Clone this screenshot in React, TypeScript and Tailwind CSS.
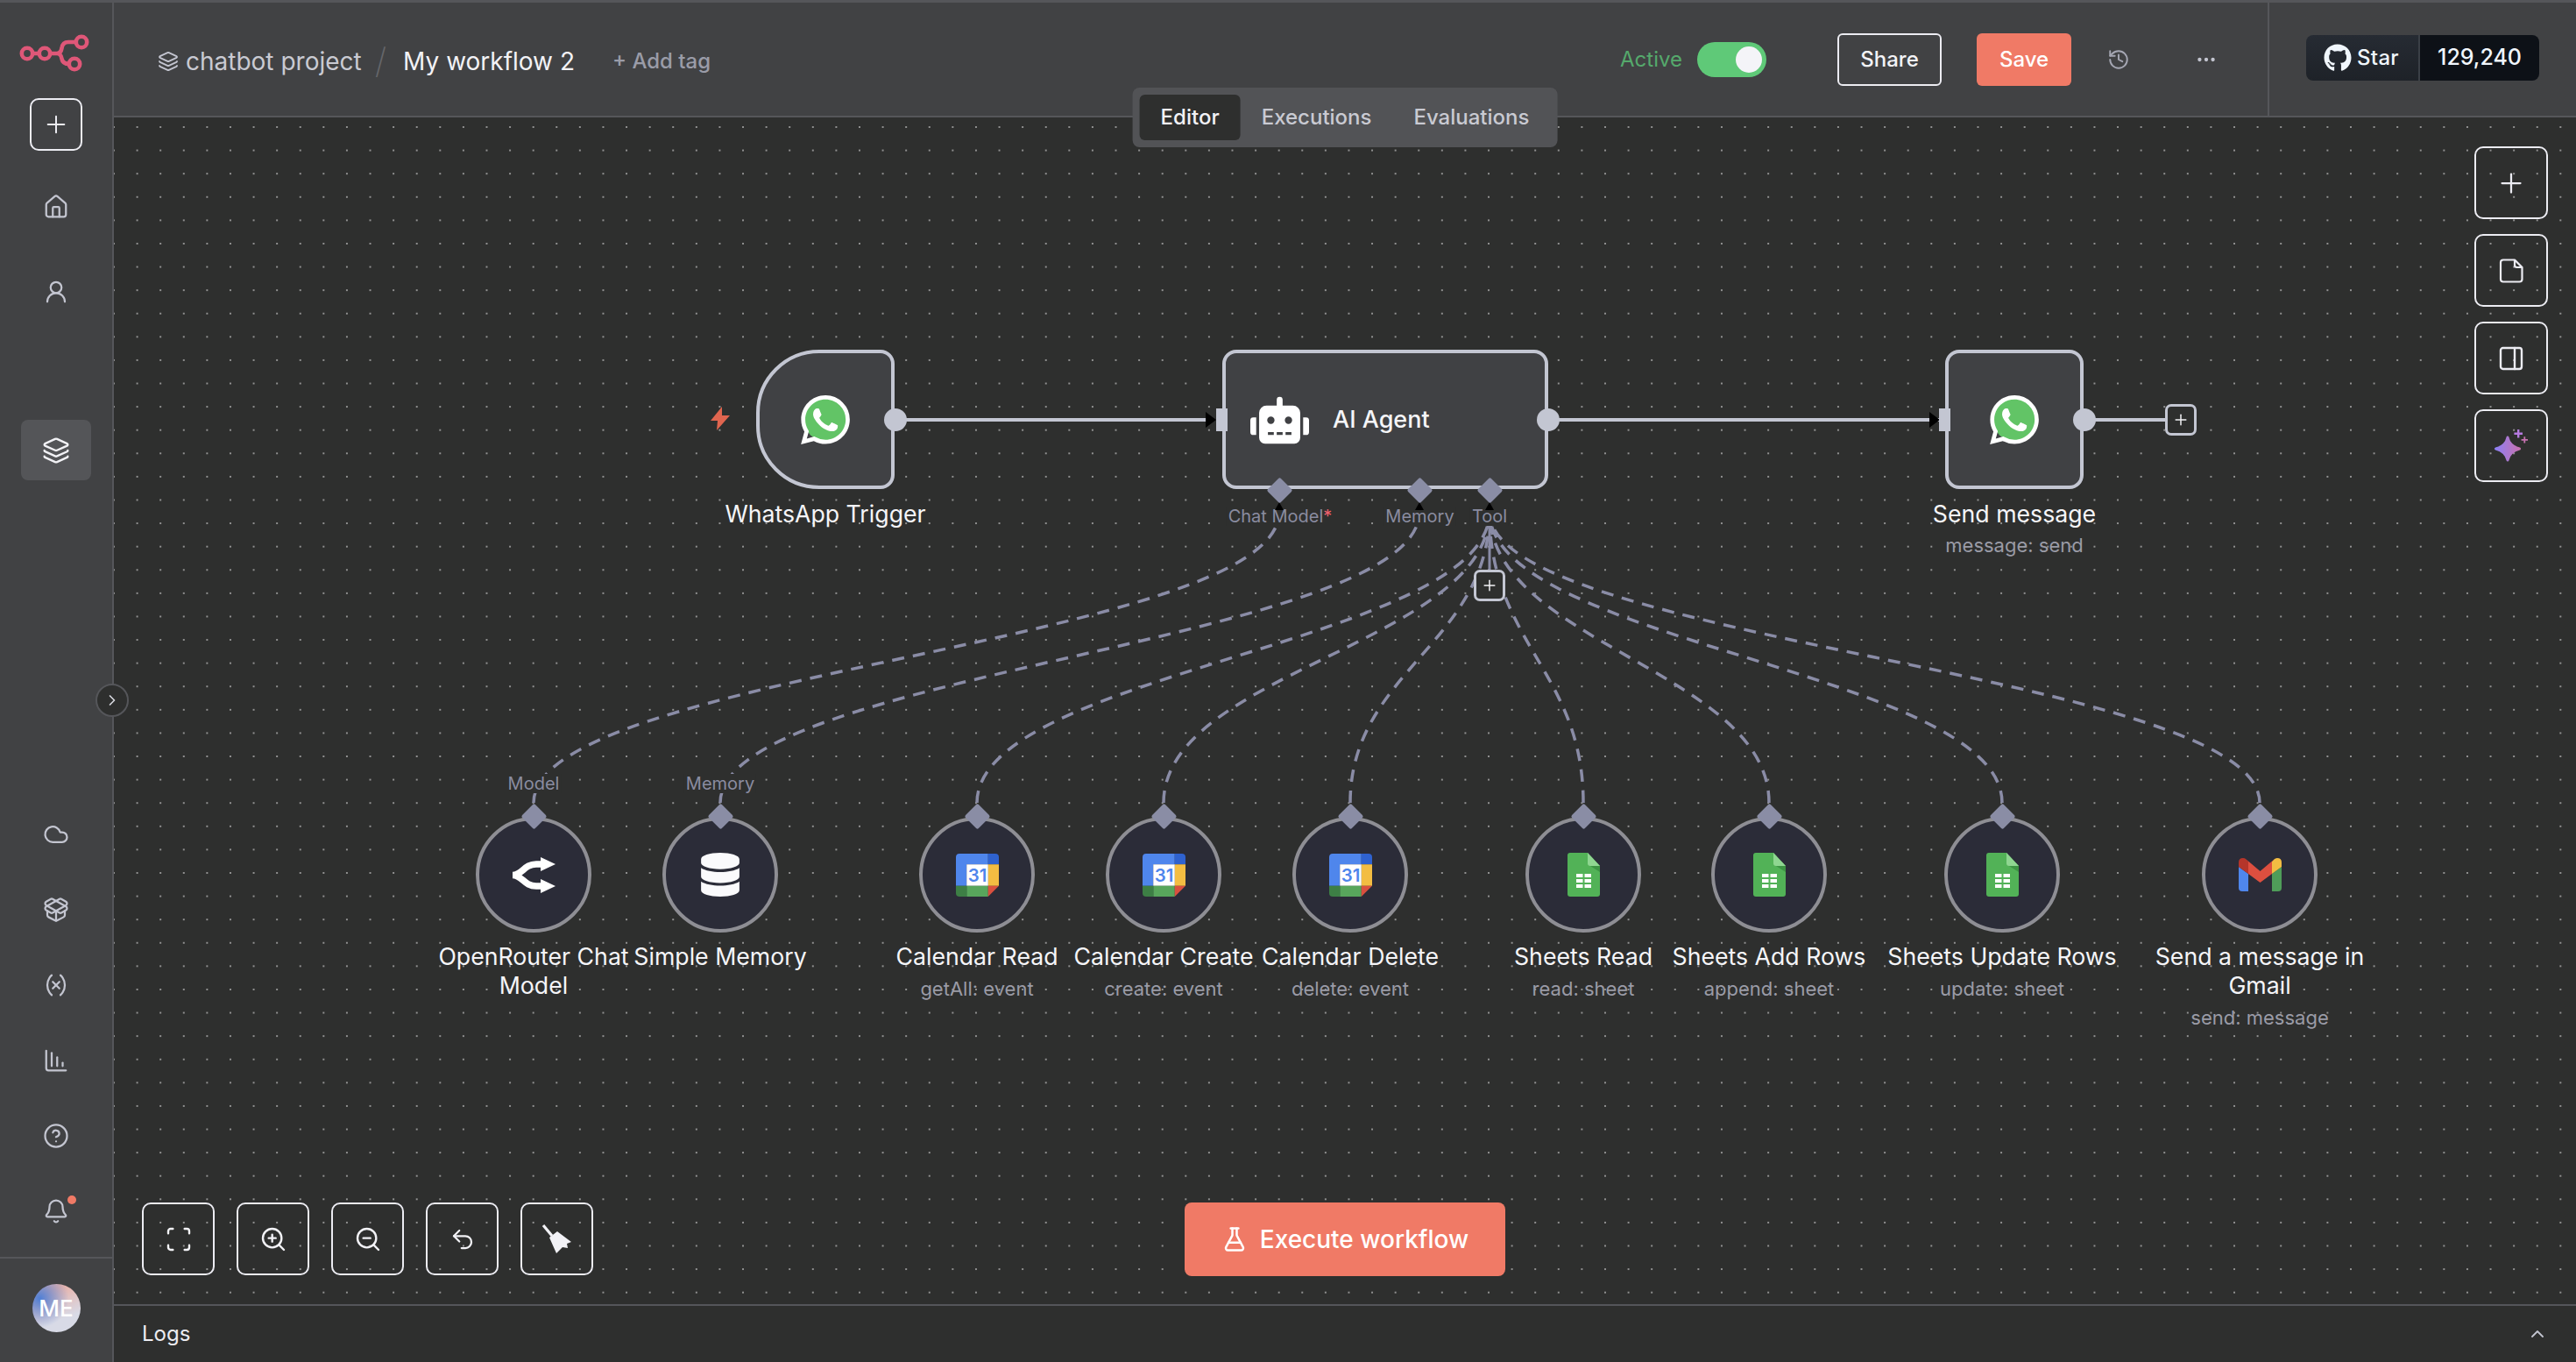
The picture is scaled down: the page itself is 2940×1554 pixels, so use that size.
import React from 'react';
import {
  Plus, House, UserRound, Layers, Cloud, PackageOpen, Variable, ChartColumnDecreasing, CircleHelp, Bell,
  History, Ellipsis, Scan, ZoomIn, ZoomOut, Undo2, FlaskConical, ChevronUp, ChevronRight, PanelRight,
} from 'lucide-react';
import { FaRobot, FaDatabase, FaGithub } from 'react-icons/fa';

const WA_PATH =
  'M17.472 14.382c-.297-.149-1.758-.867-2.03-.967-.273-.099-.471-.148-.67.15-.197.297-.767.966-.94 1.164-.173.199-.347.223-.644.075-.297-.15-1.255-.463-2.39-1.475-.883-.788-1.48-1.761-1.653-2.059-.173-.297-.018-.458.13-.606.134-.133.298-.347.446-.52.149-.174.198-.298.298-.497.099-.198.05-.371-.025-.52-.075-.149-.669-1.612-.916-2.207-.242-.579-.487-.5-.669-.51-.173-.008-.371-.01-.57-.01-.198 0-.52.074-.792.372-.272.297-1.04 1.016-1.04 2.479 0 1.462 1.065 2.875 1.213 3.074.149.198 2.096 3.2 5.077 4.487.709.306 1.262.489 1.694.625.712.227 1.36.195 1.871.118.571-.085 1.758-.719 2.006-1.413.248-.694.248-1.289.173-1.413-.074-.124-.272-.198-.57-.347m-5.421 7.403h-.004a9.87 9.87 0 01-5.031-1.378l-.361-.214-3.741.982.998-3.648-.235-.374a9.86 9.86 0 01-1.51-5.26c.001-5.45 4.436-9.884 9.888-9.884 2.64 0 5.122 1.03 6.988 2.898a9.825 9.825 0 012.893 6.994c-.003 5.45-4.437 9.884-9.885 9.884m8.413-18.297A11.815 11.815 0 0012.05 0C5.495 0 .16 5.335.157 11.892c0 2.096.547 4.142 1.588 5.945L.057 24l6.305-1.654a11.882 11.882 0 005.683 1.448h.005c6.554 0 11.89-5.335 11.893-11.893a11.821 11.821 0 00-3.48-8.413z';

function WhatsApp() {
  return (
    <svg width="56" height="56" viewBox="0 0 24 24">
      <circle cx="12" cy="12" r="10.4" fill="#62c466" />
      <path d={WA_PATH} fill="#ffffff" />
    </svg>
  );
}

function Logo() {
  return (
    <svg width="82" height="44" viewBox="22 39 82 44" fill="none" stroke="#df5778" strokeWidth="4.6">
      <circle cx="31" cy="61" r="6.2" />
      <circle cx="51" cy="61" r="6.2" />
      <circle cx="93" cy="48" r="6.2" />
      <circle cx="85" cy="73" r="6.2" />
      <path d="M37 61H45M57 61H65C69 61 70 58 70.5 55C71 51 73 48 78 48H87M65 61C69 61 70 64 70.5 67C71 70 73 73 79 73" />
    </svg>
  );
}

function CalendarIcon() {
  return (
    <svg width="49" height="49" viewBox="0 0 48 48">
      <path d="M4 0H36V12H12V36H0V4Q0 0 4 0Z" fill="#4f86ec" />
      <path d="M36 0H44Q48 0 48 4V12H36Z" fill="#2f62cf" />
      <rect x="36" y="12" width="12" height="24" fill="#f3bd42" />
      <rect x="12" y="12" width="24" height="24" fill="#ffffff" />
      <rect x="12" y="36" width="24" height="12" fill="#58a65c" />
      <path d="M0 36H12V48H4Q0 48 0 44Z" fill="#3d7f45" />
      <path d="M36 36H48L36 48Z" fill="#d9503f" />
      <text x="24" y="31" textAnchor="middle" fontSize="20" fontWeight="600" fontFamily="Inter, sans-serif" fill="#4f86ec">31</text>
    </svg>
  );
}

function SheetsIcon() {
  return (
    <svg width="37" height="50" viewBox="0 0 37 50">
      <path d="M3 0H23L37 15V47Q37 50 34 50H3Q0 50 0 47V3Q0 0 3 0Z" fill="#52b257" />
      <path d="M23 0L37 15H26Q23 15 23 12Z" fill="#8fd691" />
      <path d="M26 15H37V22Z" fill="#3d9444" />
      <path d="M10 24H27V40H10Z" fill="#ffffff" />
      <path d="M10 29H27M10 35H27M18.5 24V40" stroke="#52b257" strokeWidth="2" />
    </svg>
  );
}

function GmailIcon() {
  return (
    <svg width="49" height="38" viewBox="0 0 49 38">
      <path d="M0 10L11 18V38H4Q0 38 0 34Z" fill="#4f86ec" />
      <path d="M38 18L49 10V34Q49 38 45 38H38Z" fill="#4f9d59" />
      <path d="M0 10V5Q0 0 5 0Q7 0 8 1L11 4V18Z" fill="#b5352a" />
      <path d="M38 18V4L41 1Q43 0 44 0Q49 0 49 5V10Z" fill="#f3bd42" />
      <path d="M8 1L24.5 15L41 1L38 4V18L24.5 28L11 18V4Z" fill="#dd4f3f" />
    </svg>
  );
}

function OpenRouterIcon() {
  return (
    <svg width="50" height="41" viewBox="0 0 50 41">
      <path d="M1 20.5C12 20.5 14 8 28 8H36M1 20.5C12 20.5 14 33 28 33H36" fill="none" stroke="#fff" strokeWidth="7.5" />
      <path d="M33 0L50 8L33 16ZM33 25L50 33L33 41Z" fill="#fff" />
    </svg>
  );
}

function BroomIcon() {
  return (
    <svg width="36" height="36" viewBox="0 0 36 36" fill="#f2f2f6">
      <path d="M2 2L12 14" fill="none" stroke="#f2f2f6" strokeWidth="3.2" />
      <path d="M9 16L18 9L34 21L29 23L30 28L24 27L17 34Z" />
    </svg>
  );
}

const railIconClass = 'text-[#c3c5d0]';

function RailRow({ children }: { children: React.ReactNode }) {
  return <div className="flex items-center justify-center h-[86px]">{children}</div>;
}

function Sidebar() {
  return (
    <aside className="w-[130px] shrink-0 border-r-2 border-[#55565a] bg-[#414244] flex flex-col items-stretch">
      <div className="mt-[36px] flex justify-center pr-[3px]">
        <Logo />
      </div>
      <div className="mt-[29px] flex justify-center">
        <button className="w-[60px] h-[60px] rounded-[10px] border-2 border-[#ececf2] flex items-center justify-center text-[#ececf2]">
          <Plus size={32} strokeWidth={1.5} />
        </button>
      </div>
      <div className="mt-[15px] h-[97px] flex items-center justify-center">
        <House size={30} strokeWidth={1.8} className={railIconClass} />
      </div>
      <div className="h-[97px] flex items-center justify-center">
        <UserRound size={30} strokeWidth={1.8} className={railIconClass} />
      </div>
      <div className="mt-[98px] mx-[24px] h-[69px] rounded-[8px] bg-[#545558] flex items-center justify-center">
        <Layers size={32} strokeWidth={1.8} className="text-[#f2f2f6]" />
      </div>
      <div className="flex-1" />
      <RailRow><Cloud size={30} strokeWidth={1.8} className={railIconClass} /></RailRow>
      <RailRow><PackageOpen size={30} strokeWidth={1.8} className={railIconClass} /></RailRow>
      <RailRow><Variable size={30} strokeWidth={1.8} className={railIconClass} /></RailRow>
      <RailRow><ChartColumnDecreasing size={30} strokeWidth={1.8} className={railIconClass} /></RailRow>
      <RailRow><CircleHelp size={30} strokeWidth={1.8} className={railIconClass} /></RailRow>
      <RailRow>
        <div className="relative">
          <Bell size={30} strokeWidth={1.8} className={railIconClass} />
          <span className="absolute -top-[3px] -right-[8px] w-[10px] h-[10px] rounded-full bg-[#f07a66]" />
        </div>
      </RailRow>
      <div className="mt-[9px] h-[120px] border-t-2 border-[#55565a] flex justify-center pt-[29px]">
        <div className="w-[55px] h-[55px] rounded-full bg-[radial-gradient(circle_at_15%_30%,#4f7fd6_0%,transparent_55%),linear-gradient(160deg,#e8b3ab_20%,#d8dae6_70%)] flex items-center justify-center text-white text-[26px] font-medium">
          ME
        </div>
      </div>
    </aside>
  );
}

function Header() {
  return (
    <header className="h-[131px] shrink-0 bg-[#414244] border-b-2 border-[#55565a] flex items-stretch">
      <div className="flex items-center pl-[50px] pt-[4px]">
        <Layers size={24} strokeWidth={1.8} className="text-[#c3c5d0]" />
        <span className="ml-[8px] text-[28px] text-[#c9cad2]">chatbot project</span>
        <span className="ml-[15px] text-[40px] font-extralight text-[#65666a]">/</span>
        <span className="ml-[19px] text-[28px] text-[#f2f2f6]">My workflow 2</span>
        <span className="ml-[43px] text-[24px] font-medium text-[#9a9ca8]">+ Add tag</span>
      </div>
      <div className="ml-auto flex items-center">
        <span className="text-[24px] text-[#55a96c]">Active</span>
        <div className="ml-[17px] w-[79px] h-[40px] rounded-full bg-[#5fc978] flex items-center justify-end pr-[5px]">
          <span className="w-[30px] h-[30px] rounded-full bg-[#f4f4f8]" />
        </div>
        <button className="ml-[81px] w-[119px] h-[60px] rounded-[6px] border-2 border-[#ececf2] text-[24px] font-medium text-[#f2f2f6]">Share</button>
        <button className="ml-[40px] w-[108px] h-[60px] rounded-[6px] bg-[#f07a66] text-[24px] font-medium text-white">Save</button>
        <History size={26} strokeWidth={1.8} className="ml-[41px] text-[#a5a7b3]" />
        <Ellipsis size={26} strokeWidth={2} className="ml-[74px] text-[#c3c5d0]" />
      </div>
      <div className="ml-[57px] w-[352px] border-l-2 border-[#55565a] pl-[42px] flex items-center">
        <div className="-mt-[3px] w-[266px] h-[52px] rounded-[8px] overflow-hidden flex">
          <div className="w-[128px] bg-[linear-gradient(180deg,#262b33,#1e2228)] flex items-center justify-center gap-[6px] pr-[2px] text-[#f0f6fc]">
            <FaGithub size={32} />
            <span className="text-[24px] font-medium tracking-[0.3px]">Star</span>
          </div>
          <div className="flex-1 bg-[#0d1117] border-l-2 border-[#3a3f46] flex items-center justify-center text-[25px] font-medium text-[#f0f6fc]">
            129,240
          </div>
        </div>
      </div>
    </header>
  );
}

function Tabs() {
  return (
    <div className="absolute top-[97px] left-1/2 -translate-x-1/2 z-10 h-[68px] rounded-[8px] bg-[#525356] p-[8px] flex text-[24px] font-medium">
      <div className="h-[52px] px-[24px] rounded-[6px] bg-[#2e2f2e] text-[#f2f2f6] flex items-center">Editor</div>
      <div className="h-[52px] px-[24px] text-[#c9cad2] flex items-center">Executions</div>
      <div className="h-[52px] px-[24px] text-[#c9cad2] flex items-center">Evaluations</div>
    </div>
  );
}

const OX = 130;
const OY = 134;

type SubNode = {
  cx: number;
  name: string[];
  sub?: string;
  port?: string;
  from: number;
  icon: React.ReactNode;
};

const subNodes: SubNode[] = [
  { cx: 609, name: ['OpenRouter Chat', 'Model'], port: 'Model', from: 1460, icon: <OpenRouterIcon /> },
  { cx: 822, name: ['Simple Memory'], port: 'Memory', from: 1620, icon: <FaDatabase size={50} color="#fafafc" /> },
  { cx: 1115, name: ['Calendar Read'], sub: 'getAll: event', from: 1700, icon: <CalendarIcon /> },
  { cx: 1328, name: ['Calendar Create'], sub: 'create: event', from: 1700, icon: <CalendarIcon /> },
  { cx: 1541, name: ['Calendar Delete'], sub: 'delete: event', from: 1700, icon: <CalendarIcon /> },
  { cx: 1807, name: ['Sheets Read'], sub: 'read: sheet', from: 1700, icon: <SheetsIcon /> },
  { cx: 2019, name: ['Sheets Add Rows'], sub: 'append: sheet', from: 1700, icon: <SheetsIcon /> },
  { cx: 2285, name: ['Sheets Update Rows'], sub: 'update: sheet', from: 1700, icon: <SheetsIcon /> },
  { cx: 2579, name: ['Send a message in', 'Gmail'], sub: 'send: message', from: 1700, icon: <GmailIcon /> },
];

function edgePath(from: number, cx: number) {
  const y0 = 916;
  const y1 = 584;
  const d = (y0 - y1) * 0.45;
  return `M${cx} ${y0}C${cx} ${y0 - d} ${from} ${y1 + d} ${from} ${y1}`;
}

function Edges() {
  return (
    <svg className="absolute left-0 top-0" width="2810" height="1354" viewBox={`${OX} ${OY} 2810 1354`} fill="none">
      <path d="M1021 479H1378M1767 479H2214M2378 479H2471" stroke="#c3c6d2" strokeWidth="4" />
      <path d="M1376 470L1388 479L1376 488ZM2202 470L2214 479L2202 488Z" fill="#000" />
      {subNodes.map((n) => (
        <path key={n.cx} d={edgePath(n.from, n.cx)} stroke="#8a8ca6" strokeWidth="3.5" strokeDasharray="14 10" />
      ))}
      <path d="M1700 596V652" stroke="#8a8ca6" strokeWidth="3" />
    </svg>
  );
}

function PortArrows() {
  return (
    <svg className="absolute left-0 top-0" width="2810" height="1354" viewBox={`${OX} ${OY} 2810 1354`} fill="none">
      <path d="M1455 582L1460 573L1465 582ZM1615 582L1620 573L1625 582ZM1695 582L1700 573L1705 582Z" fill="#000" />
    </svg>
  );
}

function Diamond({ x, y }: { x: number; y: number }) {
  return (
    <div
      className="absolute w-[21px] h-[21px] -ml-[10.5px] -mt-[10.5px] rotate-45 rounded-[2px] bg-[#8a8da5]"
      style={{ left: x - OX, top: y - OY }}
    />
  );
}

function CenterLabel({ x, y, className, children }: { x: number; y: number; className: string; children: React.ReactNode }) {
  return (
    <div
      className={`absolute -translate-x-1/2 -translate-y-1/2 whitespace-nowrap text-center ${className}`}
      style={{ left: x - OX, top: y - OY }}
    >
      {children}
    </div>
  );
}

function Port({ x }: { x: number }) {
  return (
    <div
      className="absolute w-[26px] h-[26px] -ml-[13px] -mt-[13px] rounded-full bg-[#c3c6d2]"
      style={{ left: x - OX, top: 479 - OY }}
    />
  );
}

function InputPort({ x }: { x: number }) {
  return <div className="absolute w-[13px] h-[26px] bg-[#c3c6d2]" style={{ left: x - OX, top: 466 - OY }} />;
}

function MainNode({ x, w, trigger, children }: { x: number; w: number; trigger?: boolean; children: React.ReactNode }) {
  return (
    <div
      className={`absolute h-[159px] border-4 border-[#c3c6d2] bg-[#404144] flex items-center ${
        trigger ? 'rounded-l-[72px] rounded-r-[16px] justify-center' : 'rounded-[16px] justify-center'
      }`}
      style={{ left: x - OX, top: 399 - OY, width: w }}
    >
      {children}
    </div>
  );
}

function AddBox({ x, y }: { x: number; y: number }) {
  return (
    <div
      className="absolute w-[36px] h-[36px] -ml-[18px] -mt-[18px] rounded-[7px] border-[3px] border-[#c3c6d2] bg-[#2e2f2e] flex items-center justify-center text-[#f2f2f6]"
      style={{ left: x - OX, top: y - OY }}
    >
      <Plus size={20} strokeWidth={1.8} />
    </div>
  );
}

const nameClass = 'text-[26.7px] leading-[33px] text-[#f5f5f8]';
const subClass = 'text-[22px] leading-[30px] text-[#9a9ba6]';
const portClass = 'text-[20px] leading-[22px] px-[2px] bg-[#2e2f2e] text-[#8a8ca0]';
const rightButton = 'w-[84px] h-[83px] rounded-[10px] border-2 border-[#ececf2] flex items-center justify-center';

function Canvas() {
  return (
    <div className="relative flex-1 overflow-hidden bg-[#2e2f2e] bg-[radial-gradient(circle_at_1px_1px,#919191_1px,transparent_1.1px)] bg-size-[26.6px_26.6px] bg-position-[-1px_10px]">
      <Edges />

      <CenterLabel x={1461} y={589} className={portClass}>Chat Model<span className="text-[#f0616d]">*</span></CenterLabel>
      <CenterLabel x={1620.5} y={589} className={portClass}>Memory</CenterLabel>
      <CenterLabel x={1700} y={589} className={portClass}>Tool</CenterLabel>
      <PortArrows />

      <MainNode x={863} w={158} trigger><WhatsApp /></MainNode>
      <MainNode x={1395} w={372}>
        <div className="flex items-center w-full pl-[28px] pt-[1px]">
          <FaRobot size={67} color="#ffffff" />
          <span className="ml-[27px] text-[27px] font-medium text-[#f5f5f8]">AI Agent</span>
        </div>
      </MainNode>
      <MainNode x={2220} w={158}><WhatsApp /></MainNode>

      <Port x={1022} />
      <Port x={1767} />
      <Port x={2379} />
      <InputPort x={1388} />
      <InputPort x={2213} />
      <Diamond x={1460} y={559} />
      <Diamond x={1620.5} y={559} />
      <Diamond x={1700} y={559} />
      <AddBox x={2489} y={479} />
      <AddBox x={1700} y={668} />

      <svg className="absolute" style={{ left: 810 - OX, top: 464 - OY }} width="24" height="27" viewBox="0 0 24 27">
        <path d="M14 0L1 16H9L8 27L23 10H14Z" fill="#e0654f" />
      </svg>

      <CenterLabel x={942} y={586} className={nameClass}>WhatsApp Trigger</CenterLabel>
      <CenterLabel x={2299} y={586} className={nameClass}>Send message</CenterLabel>
      <CenterLabel x={2299} y={622} className={subClass}>message: send</CenterLabel>

      {subNodes.map((n) => (
        <React.Fragment key={n.cx}>
          <div
            className="absolute w-[132px] h-[132px] -ml-[66px] rounded-full border-4 border-[#8e8e94] bg-[#2b2c38] flex items-center justify-center"
            style={{ left: n.cx - OX, top: 932 - OY }}
          >
            {n.icon}
          </div>
          <Diamond x={n.cx} y={931} />
          {n.port && <CenterLabel x={n.cx} y={894} className={portClass}>{n.port}</CenterLabel>}
          <div
            className="absolute -translate-x-1/2 w-[300px] top-[941px] flex flex-col items-center"
            style={{ left: n.cx - OX }}
          >
            {n.name.map((line) => (
              <div key={line} className={`${nameClass} whitespace-nowrap`}>{line}</div>
            ))}
            {n.sub && <div className={`${subClass} mt-[5px]`}>{n.sub}</div>}
          </div>
        </React.Fragment>
      ))}

      <div className="absolute left-[32px] top-[1238px] flex gap-[25px] text-[#f2f2f6]">
        {[
          <Scan key="a" size={32} strokeWidth={1.8} />,
          <ZoomIn key="b" size={32} strokeWidth={1.8} />,
          <ZoomOut key="c" size={32} strokeWidth={1.8} />,
          <Undo2 key="d" size={30} strokeWidth={1.8} />,
          <BroomIcon key="e" />,
        ].map((icon, i) => (
          <button key={i} className="w-[83px] h-[83px] rounded-[10px] border-2 border-[#ececf2] flex items-center justify-center">
            {icon}
          </button>
        ))}
      </div>

      <button className="absolute left-1/2 -translate-x-1/2 top-[1238px] w-[366px] h-[84px] rounded-[8px] bg-[#f07a66] text-white flex items-center justify-center gap-[14px] text-[28px] font-medium">
        <FlaskConical size={30} strokeWidth={2} />
        Execute workflow
      </button>

      <div className="absolute right-[32px] top-[33px] flex flex-col gap-[17px] text-[#ececf2]">
        <button className={rightButton}>
          <Plus size={36} strokeWidth={1.5} />
        </button>
        <button className={rightButton}>
          <svg width="28" height="28" viewBox="0 0 28 28" fill="none" stroke="currentColor" strokeWidth="2.2" strokeLinejoin="round">
            <path d="M5 1.5H18L26.5 10V23.5Q26.5 26.5 23.5 26.5H5Q2 26.5 2 23.5V4.5Q2 1.5 5 1.5Z" />
            <path d="M18 1.5V7.5Q18 10 20.5 10H26.5" />
          </svg>
        </button>
        <button className={rightButton}>
          <PanelRight size={32} strokeWidth={1.8} />
        </button>
        <button className={rightButton}>
          <svg width="38" height="38" viewBox="0 0 38 38">
            <defs>
              <linearGradient id="spark" x1="0" y1="0" x2="1" y2="0">
                <stop offset="0" stopColor="#8f7ff2" />
                <stop offset="1" stopColor="#c672b0" />
              </linearGradient>
            </defs>
            <path
              d="M15 9C16.5 16 21 20 28.5 22C21 24 16.5 28 15 35C13.5 28 9 24 1.5 22C9 20 13.5 16 15 9Z"
              fill="url(#spark)"
              stroke="url(#spark)"
              strokeWidth="3"
              strokeLinejoin="round"
            />
            <path d="M26 0H28.4V3.6H32V6H28.4V9.6H26V6H22.4V3.6H26Z" fill="#b57ae0" />
            <path d="M33.4 8.2H35.2V11H38V12.8H35.2V15.6H33.4V12.8H30.6V11H33.4Z" fill="#c672b0" />
          </svg>
        </button>
      </div>
    </div>
  );
}

function Logs() {
  return (
    <div className="h-[66px] shrink-0 border-t-2 border-[#55565a] bg-[#2e2f2e] flex items-center justify-between pl-[32px] pr-[32px]">
      <span className="text-[24px] text-[#ececf2]">Logs</span>
      <ChevronUp size={24} strokeWidth={1.8} className="text-[#c3c5d0]" />
    </div>
  );
}

export default function App() {
  return (
    <div className="w-[2940px] h-[1554px] overflow-hidden flex flex-col bg-[#2e2f2e] font-['Inter',sans-serif]">
      <div className="h-[3px] shrink-0 bg-[#55565a]" />
      <div className="flex-1 flex min-h-0 relative">
        <Sidebar />
        <main className="relative flex-1 min-w-0 flex flex-col">
          <Header />
          <Tabs />
          <Canvas />
          <Logs />
        </main>
        <button className="absolute left-[109px] top-[777px] z-20 w-[38px] h-[38px] rounded-full border-2 border-[#55565a] bg-[#2e2f2e] flex items-center justify-center text-[#d8d9e0]">
          <ChevronRight size={20} strokeWidth={2} />
        </button>
      </div>
    </div>
  );
}
